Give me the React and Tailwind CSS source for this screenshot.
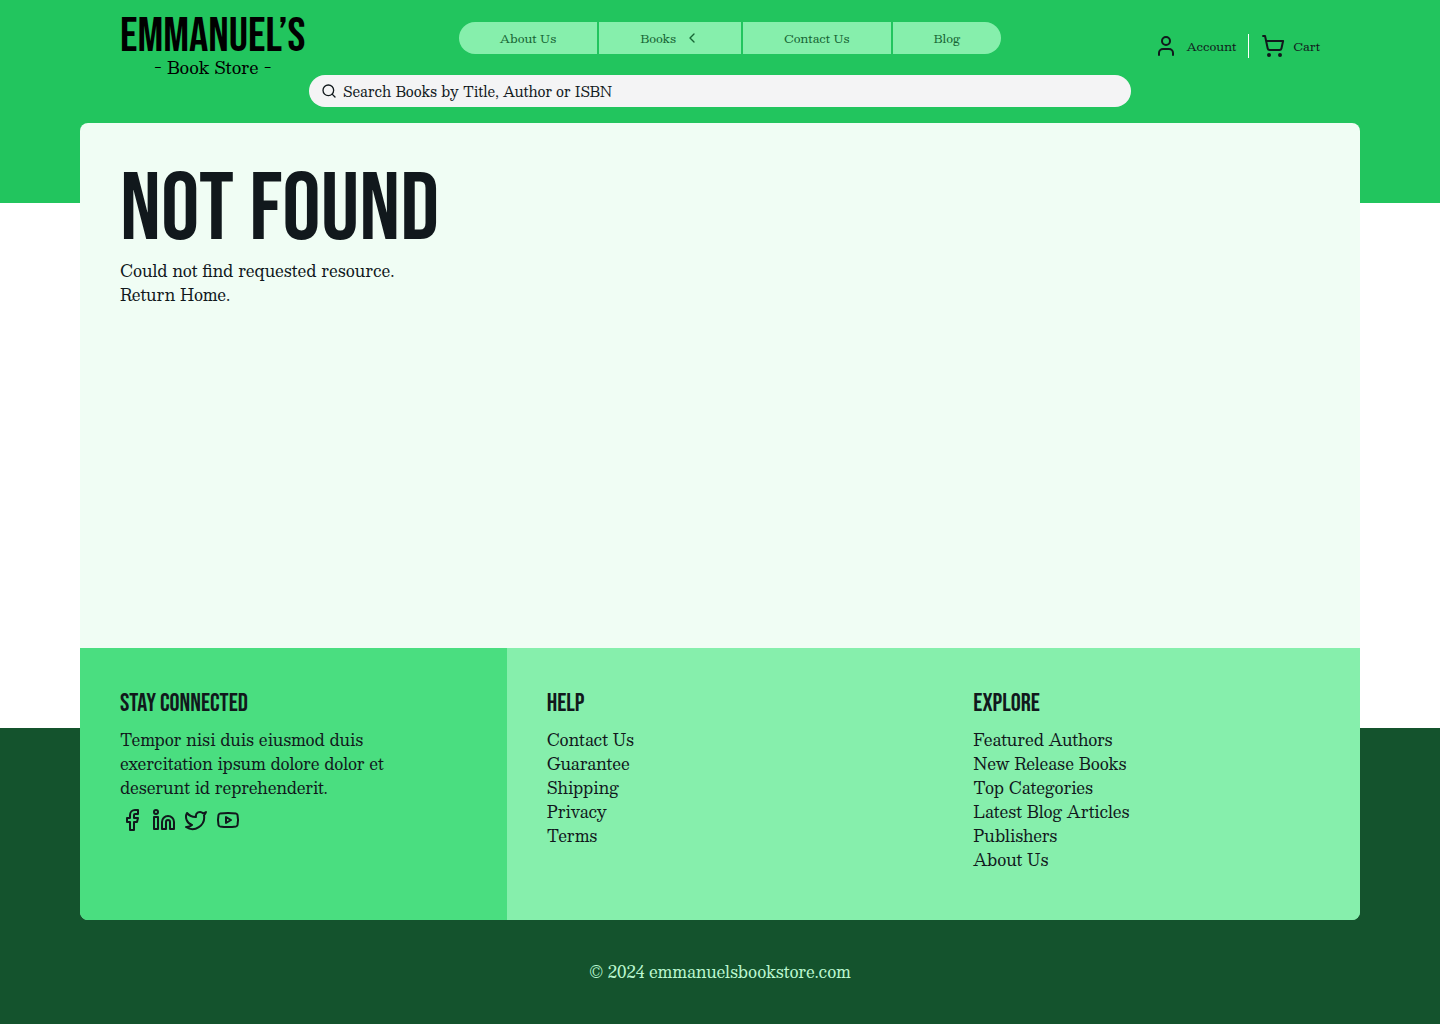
import {
  ChevronLeft,
  Facebook,
  Linkedin,
  Search,
  ShoppingCart,
  Twitter,
  User,
  Youtube,
} from "lucide-react";

const socials = [
  { label: "Facebook", Icon: Facebook },
  { label: "LinkedIn", Icon: Linkedin },
  { label: "Twitter", Icon: Twitter },
  { label: "YouTube", Icon: Youtube },
];

const helpLinks = ["Contact Us", "Guarantee", "Shipping", "Privacy", "Terms"];

const exploreLinks = [
  "Featured Authors",
  "New Release Books",
  "Top Categories",
  "Latest Blog Articles",
  "Publishers",
  "About Us",
];

const display = "font-['Bebas_Neue','Roboto_Condensed','Liberation_Sans_Narrow',sans-serif]";

function NavLink({ children }) {
  return (
    <a href="#" className="flex items-center bg-[#86efac] px-[41px]">
      {children}
    </a>
  );
}

function Header() {
  return (
    <header className="bg-[#22c55e] px-20 pt-4 pb-24">
      <div className="flex h-[59px] items-center justify-between px-10">
        <a href="#" className="flex flex-col items-center self-start text-black">
          <span className={`${display} text-[48px] leading-[41px]`}>EMMANUEL’S</span>
          <span className="text-[17px] leading-5">- Book Store -</span>
        </a>
        <nav
          aria-label="Main"
          className="mb-4 flex h-8 gap-0.5 overflow-hidden rounded-full text-xs text-[#166534]"
        >
          <NavLink>About Us</NavLink>
          <button type="button" className="flex items-center gap-2 bg-[#86efac] px-[41px]">
            Books
            <ChevronLeft size={16} />
          </button>
          <NavLink>Contact Us</NavLink>
          <NavLink>Blog</NavLink>
        </nav>
        <div className="flex items-center text-xs">
          <a href="#" className="flex h-6 items-center gap-2 border-r border-white pr-3">
            <User size={24} />
            Account
          </a>
          <a href="#" className="flex h-6 items-center gap-2 pl-3">
            <ShoppingCart size={24} />
            Cart
          </a>
        </div>
      </div>
      <form
        role="search"
        className="mx-auto flex h-8 max-w-[822px] items-center gap-1.5 rounded-full bg-[#f4f4f5] px-3"
      >
        <label htmlFor="book-search">
          <Search size={16} aria-label="Search" />
        </label>
        <input
          id="book-search"
          type="text"
          placeholder="Search Books by Title, Author or ISBN"
          className="min-w-0 flex-1 bg-transparent text-sm outline-none placeholder:text-[#11181c]"
        />
      </form>
    </header>
  );
}

function FooterLinks({ title, links }) {
  return (
    <section className="bg-[#86efac] px-10 pt-10 pb-12">
      <h2 className={`${display} mb-2 text-[25px] leading-8`}>{title}</h2>
      <ul>
        {links.map((link) => (
          <li key={link}>
            <a href="#">{link}</a>
          </li>
        ))}
      </ul>
    </section>
  );
}

export default function App() {
  return (
    <div className="flex min-h-screen flex-col bg-white font-['Besley','Liberation_Serif',serif] text-base leading-6 text-[#11181c]">
      <Header />
      <main className="mx-20 -mt-20 flex-1 rounded-t-lg bg-[#f0fdf4] px-10 pt-10 pb-24">
        <h1 className={`${display} text-8xl leading-[96px]`}>NOT FOUND</h1>
        <p>Could not find requested resource.</p>
        <a href="#">Return Home.</a>
      </main>
      <footer className="bg-[#14532d] px-20">
        <div className="-mt-20 grid grid-cols-3 overflow-hidden rounded-b-lg bg-[#86efac]">
          <section className="bg-[#4ade80] px-10 pt-10 pb-12">
            <h2 className={`${display} mb-2 text-[25px] leading-8`}>STAY CONNECTED</h2>
            <p className="max-w-[300px]">
              Tempor nisi duis eiusmod duis exercitation ipsum dolore dolor et deserunt id
              reprehenderit.
            </p>
            <div className="mt-2 flex gap-2">
              {socials.map(({ label, Icon }) => (
                <a key={label} href="#" aria-label={label}>
                  <Icon size={24} />
                </a>
              ))}
            </div>
          </section>
          <FooterLinks title="HELP" links={helpLinks} />
          <FooterLinks title="EXPLORE" links={exploreLinks} />
        </div>
        <p className="py-10 text-center text-[#bbf7d0]">© 2024 emmanuelsbookstore.com</p>
      </footer>
    </div>
  );
}
